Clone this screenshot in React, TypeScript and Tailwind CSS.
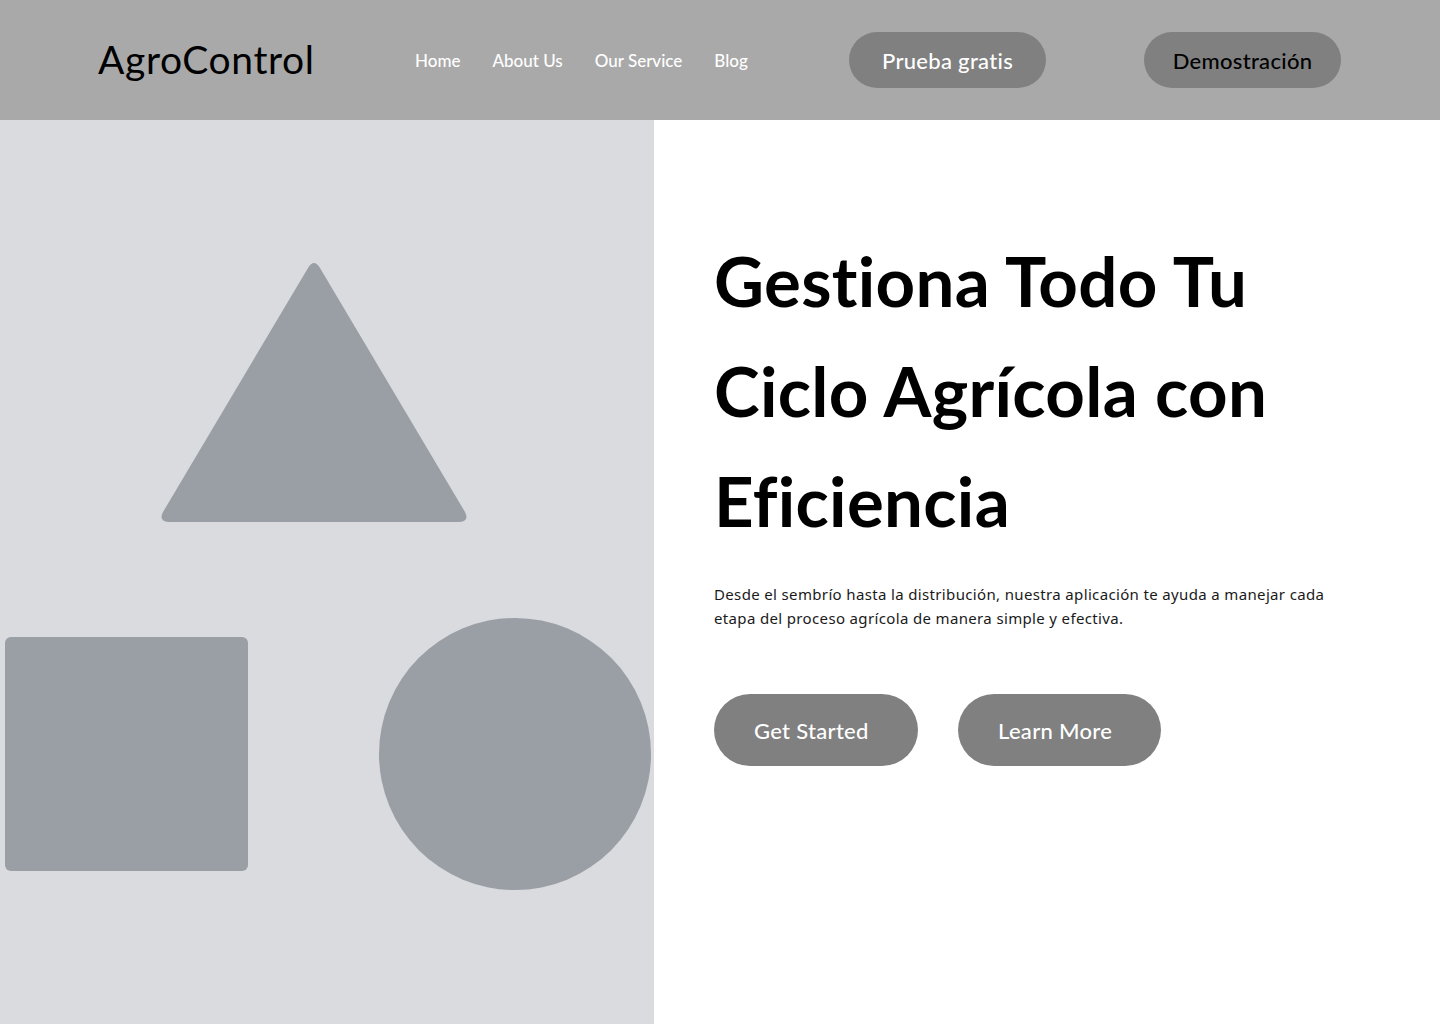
import React from 'react';

const navLinks = ['Home', 'About Us', 'Our Service', 'Blog'];

function HeroPlaceholder() {
  return (
    <svg viewBox="0 0 654 904" className="w-full h-full block" preserveAspectRatio="none">
      <rect width="654" height="904" fill="#dadbdf" />
      <path
        d="M308 148 Q314 138 320 148 L465 392 Q470 402 458 402 L170 402 Q158 402 163 392 Z"
        fill="#9a9fa6"
      />
      <rect x="5" y="517" width="243" height="234" rx="6" fill="#9a9fa6" />
      <circle cx="515" cy="634" r="136" fill="#9a9fa6" />
    </svg>
  );
}

export default function App() {
  return (
    <div className="w-[1440px] h-[1024px] bg-white flex flex-col overflow-hidden" style={{ fontFamily: 'Lato, "Open Sans", sans-serif' }}>
      {/* Header */}
      <header className="h-[120px] shrink-0 bg-[#a9a9a9] flex items-center pl-[98px] pr-[99px]">
        <div className="text-[39px] text-black tracking-[0.6px] w-[317px] pb-[2px]">AgroControl</div>
        <nav className="flex items-center gap-8 pt-[2px]">
          {navLinks.map(link => (
            <a key={link} className="text-[17px] font-medium text-white">{link}</a>
          ))}
        </nav>
        <div className="ml-auto flex items-center gap-[98px]">
          <button className="w-[197px] h-[56px] rounded-full bg-[#808080] text-white text-[22px] font-medium tracking-[0.3px]">
            Prueba gratis
          </button>
          <button className="w-[197px] h-[56px] rounded-full bg-[#808080] text-black text-[22px] font-medium tracking-[0.3px]">
            Demostración
          </button>
        </div>
      </header>

      {/* Hero */}
      <main className="flex-1 flex">
        <div className="w-[654px] shrink-0">
          <HeroPlaceholder />
        </div>
        <div className="flex-1 pl-[60px] pr-[90px] pt-[106px]">
          <h1 className="text-[69px] font-bold leading-[110px] text-black tracking-[0.3px]">
            Gestiona Todo Tu<br />Ciclo Agrícola con<br />Eficiencia
          </h1>
          <p className="mt-[26px] text-[15px] leading-[24px] text-[#1a1a1a] tracking-[0.35px] max-w-[630px]" style={{ fontFamily: '"Noto Sans", Lato, sans-serif' }}>
            Desde el sembrío hasta la distribución, nuestra aplicación te ayuda a manejar cada etapa del proceso agrícola de manera simple y efectiva.
          </p>
          <div className="flex gap-10 mt-[64px]">
            <button className="w-[204px] h-[72px] rounded-full bg-[#808080] text-white text-[22px] font-medium text-left pl-10 tracking-[0.3px]">
              Get Started
            </button>
            <button className="w-[203px] h-[72px] rounded-full bg-[#808080] text-white text-[22px] font-medium text-left pl-10 tracking-[0.3px]">
              Learn More
            </button>
          </div>
        </div>
      </main>
    </div>
  );
}
